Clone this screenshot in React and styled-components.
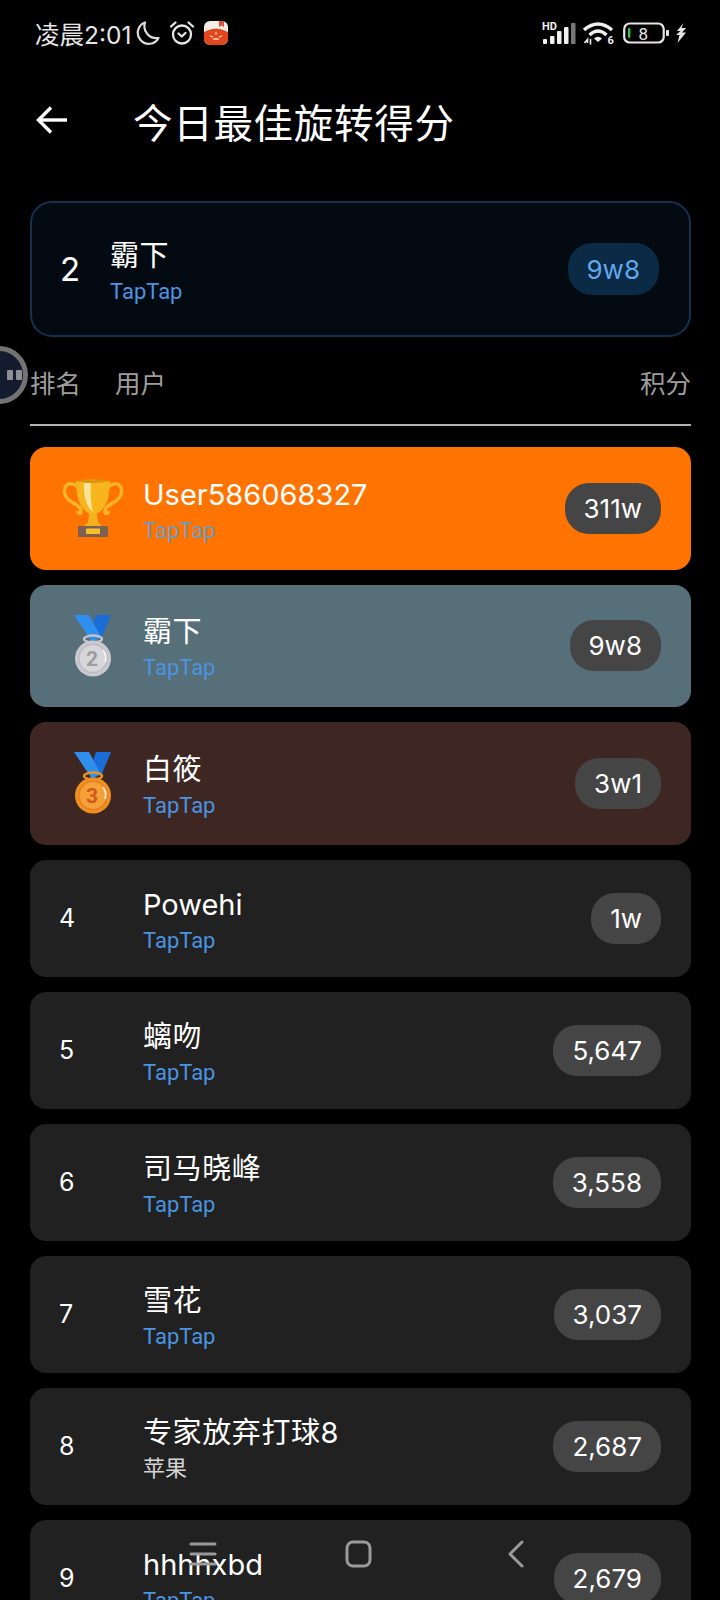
import styled, { createGlobalStyle } from "styled-components";

const GlobalStyle = createGlobalStyle`
    html, body {
        margin: 0;
        padding: 0;
        background: #000;
    }
    * {
        box-sizing: border-box;
    }
`

const Screen = styled.div`
    position: relative;
    width: 720px;
    height: 1600px;
    overflow: hidden;
    background: #000;
    color: #fff;
    font-family: "Inter", "Noto Sans CJK SC", sans-serif;
`

const StatusBar = styled.div`
    height: 68px;
    padding: 0 34px 2px 35px;
    display: flex;
    align-items: center;
    justify-content: space-between;
`

const StatusGroup = styled.div`
    display: flex;
    align-items: center;
    gap: ${(p) => p.$gap || 0}px;
`

const Clock = styled.span`
    width: 95px;
    font-size: 24.5px;
    color: #e6e6e6;
    white-space: nowrap;
    margin-right: -3px;
`

const Header = styled.div`
    height: 104px;
    padding: 0 0 0 36px;
    display: flex;
    align-items: center;
`

const Title = styled.h1`
    margin: 0 0 0 65px;
    font-size: 39.5px;
    font-weight: 400;
    letter-spacing: 0.7px;
`

const Content = styled.div`
    padding: 29px 29px 0 30px;
`

const MyCard = styled.div`
    height: 136px;
    padding: 0 30px 0 28px;
    display: flex;
    align-items: center;
    border: 2px solid #14324f;
    border-radius: 22px;
    background: #030a12;
`

const MyRank = styled.div`
    width: 51px;
    font-size: 33px;
`

const UserInfo = styled.div`
    flex: 1;
    min-width: 0;
    padding-top: 3px;
    display: flex;
    flex-direction: column;
`

const UserName = styled.div`
    font-size: 29px;
    line-height: 38px;
    letter-spacing: ${(p) => (p.$latin ? 0 : 0.6)}px;
    margin-left: -1px;
`

const Platform = styled.div`
    margin: 3px 0 0 -1px;
    font-family: "Roboto", "Noto Sans CJK SC", sans-serif;
    font-size: 22px;
    line-height: 27px;
    color: ${(p) => p.$color || "#4a94e0"};
`

const MyScore = styled.div`
    height: 52px;
    padding: 0 19px;
    display: flex;
    align-items: center;
    border-radius: 24px;
    background: #0b2a45;
    color: #62a8ea;
    font-size: 26px;
`

const TableHead = styled.div`
    height: 89px;
    padding-top: 2px;
    display: flex;
    align-items: center;
    justify-content: space-between;
    border-bottom: 2px solid #b3b3b3;
    color: #9e9e9e;
    font-size: 25.5px;
`

const HeadLeft = styled.div`
    display: flex;
    gap: 34px;
`

const Rows = styled.div`
    margin-top: 21px;
    display: flex;
    flex-direction: column;
    gap: 15px;
`

const Row = styled.div`
    height: ${(p) => (p.$top ? 122.5 : 117)}px;
    padding: 0 30px 0 29px;
    display: flex;
    align-items: center;
    flex-shrink: 0;
    border-radius: 16px;
    background: ${(p) => p.$bg || "#212121"};
`

const RankCell = styled.div`
    width: 85px;
    flex-shrink: 0;
    display: flex;
    align-items: center;
    font-size: 25px;
`

const BadgeSlot = styled.div`
    width: 67px;
    display: flex;
    justify-content: center;
`

const Score = styled.div`
    height: 51px;
    padding: 0 19px;
    display: flex;
    align-items: center;
    border-radius: 24px;
    background: #454545;
    font-size: 26px;
`

const Bubble = styled.div`
    position: absolute;
    left: -30px;
    top: 346px;
    width: 58px;
    height: 58px;
    display: flex;
    align-items: center;
    justify-content: flex-end;
    gap: 3px;
    padding-right: 1px;
    border: 5px solid #737373;
    border-radius: 50%;
    background: #131c2e;
`

const BubbleEye = styled.span`
    width: 6px;
    height: 10px;
    border-radius: 1px;
    background: #8d8f94;
`

const NavBar = styled.div`
    position: absolute;
    left: 0;
    right: 0;
    top: 1540px;
    height: 50px;
    pointer-events: none;
`

const NavIcon = styled.svg`
    position: absolute;
    top: 0;
    left: ${(p) => p.$left}px;
`

const Moon = () => (
    <svg width="24" height="24" viewBox="0 0 24 24" fill="none" stroke="#dcdcdc" strokeWidth="2.2">
        <path d="M9 1.5 A11 11 0 1 0 22.5 17 A12 12 0 0 1 9 1.5 Z" strokeLinejoin="round" />
    </svg>
)

const Alarm = () => (
    <svg width="26" height="26" viewBox="0 0 26 26" fill="none" stroke="#e6e6e6" strokeWidth="2.3" strokeLinecap="round" strokeLinejoin="round">
        <circle cx="13" cy="14.5" r="9" />
        <path d="M9.5 13.5 L12.8 16.5 L16.5 13" />
        <path d="M2 6.5 L6.5 2.5 M24 6.5 L19.5 2.5" />
    </svg>
)

const TomatoApp = () => (
    <svg width="24" height="24" viewBox="0 0 24 24">
        <rect width="24" height="24" rx="6" fill="#f7efe6" />
        <path d="M0 11 Q12 4 24 11 V18 A6 6 0 0 1 18 24 H6 A6 6 0 0 1 0 18 Z" fill="#e2461c" />
        <path d="M15 0 H20 V6 L17.5 4.5 L15 6 Z" fill="#d9533a" />
        <path d="M6.5 15 L8.5 16 M12 11.5 V13.5 M17.5 15 L15.5 16 M9.5 18 H14.5" stroke="#f9d8b8" strokeWidth="1.3" strokeLinecap="round" />
    </svg>
)

const Signal = () => (
    <svg width="34" height="24" viewBox="0 0 34 24">
        <text x="0" y="9" fill="#f0f0f0" fontSize="11" fontWeight="700" fontFamily="Roboto, sans-serif">HD</text>
        <rect x="1" y="18" width="4" height="5" rx="1" fill="#f0f0f0" />
        <rect x="8" y="15" width="4.5" height="8" rx="1" fill="#f0f0f0" />
        <rect x="15" y="10" width="4.5" height="13" rx="1" fill="#f0f0f0" />
        <rect x="22" y="6" width="4.5" height="17" rx="1" fill="#f0f0f0" />
        <rect x="29" y="2" width="4.5" height="21" rx="1" fill="#777" />
    </svg>
)

const Wifi = () => (
    <svg width="33" height="26" viewBox="0 0 33 26" fill="none">
        <path d="M1 10 Q15 -2 29 10" stroke="#f0f0f0" strokeWidth="3.4" />
        <path d="M6.5 15 Q15 7 23.5 15" stroke="#f0f0f0" strokeWidth="3.4" />
        <path d="M15 22 L11 18.5 Q15 15 19 18.5 Z" fill="#f0f0f0" />
        <text x="24.5" y="24" fill="#f0f0f0" fontSize="11" fontWeight="700" fontFamily="Roboto, sans-serif">6</text>
        <path d="M1.5 23 L4.5 19.5 V23 M7.5 19 V24.5" stroke="#f0f0f0" strokeWidth="1.6" />
    </svg>
)

const Battery = () => (
    <svg width="46" height="22" viewBox="0 0 46 22" fill="none">
        <rect x="1.2" y="1.5" width="39.5" height="19" rx="5.5" stroke="#e6e6e6" strokeWidth="2.2" />
        <rect x="5" y="6" width="2.4" height="10" rx="1.2" fill="#35c24a" />
        <text x="15.5" y="17.5" fill="#e6e6e6" fontSize="17" fontFamily="Roboto, sans-serif">8</text>
        <rect x="43" y="8" width="3" height="6" rx="1" fill="#e6e6e6" />
    </svg>
)

const Bolt = () => (
    <svg width="10" height="20" viewBox="0 0 10 20">
        <path d="M7.5 0 L1 8 H4.5 L0 12 H3.5 L1.5 20 L10 9.5 H6 L10 5 H5.5 Z" fill="#e6e6e6" />
    </svg>
)

const BackArrow = () => (
    <svg width="32" height="30" viewBox="0 0 32 30" fill="none" stroke="#fff" strokeWidth="3.4">
        <path d="M31 15 H3" />
        <path d="M15 2.5 L2.5 15 L15 27.5" />
    </svg>
)

const Trophy = () => (
    <svg width="62" height="60" viewBox="0 0 62 60" fill="none">
        <path d="M15 8 C3 0 -2 15 7 22 C12 27 18 26 19 33 C20 37 15 36 16 33" stroke="#f6b428" strokeWidth="3.4" />
        <path d="M47 8 C59 0 64 15 55 22 C50 27 44 26 43 33 C42 37 47 36 46 33" stroke="#f6b428" strokeWidth="3.4" />
        <path d="M14 3 H48 C48 18 45 31 34 36 H28 C17 31 14 18 14 3 Z" fill="#f8b51d" />
        <path d="M22 5 H29 C28 16 29 26 31 34 C25 30 21 18 22 5 Z" fill="#fde39b" />
        <path d="M14 3 Q31 -1 48 3 Q31 7 14 3 Z" fill="#dd9411" />
        <path d="M27 36 H35 L36 44 L41 49 H21 L26 44 Z" fill="#f5b01c" />
        <rect x="16" y="48" width="30" height="11" fill="#7c6152" />
        <rect x="24" y="50.5" width="14" height="5.5" fill="#f8bf28" />
    </svg>
)

const Medal = ({ rank }) => {
    const bronze = rank === 3
    const rim = bronze ? "#f0911f" : "#c9c9cf"
    const inner = bronze ? "#f4a138" : "#d7d7db"
    const digit = bronze ? "#d3581e" : "#9c9ca3"
    const ring = bronze ? "#e8951f" : "#c2c2c8"
    return (
        <svg width="38" height="62" viewBox="0 0 38 62" fill="none">
            <path d="M22 0 H37 L27 24 L16 18 Z" fill="#1a6cd6" />
            <path d="M0 0 H15 L27 22 L18 27 Z" fill="#2f8fee" />
            <ellipse cx="19" cy="24" rx="9" ry="3.5" stroke={ring} strokeWidth="2.4" />
            <circle cx="19" cy="43.5" r="18" fill={rim} />
            <circle cx="19" cy="43.5" r="14" fill={inner} stroke={digit} strokeOpacity="0.35" strokeWidth="1.5" />
            <path d="M29 35 A13 13 0 0 1 31 47" stroke="#fff" strokeOpacity="0.7" strokeWidth="2" />
            <text x="18" y="51" textAnchor="middle" fill={digit} fontSize="21" fontWeight="700" fontFamily="Roboto, sans-serif">{rank}</text>
        </svg>
    )
}

const players = [
    { rank: 1, name: "User586068327", score: "311w", bg: "#ff7300", platformColor: "#6c9bc0", latin: true },
    { rank: 2, name: "霸下", score: "9w8", bg: "#566f79" },
    { rank: 3, name: "白筱", score: "3w1", bg: "#3e2723" },
    { rank: 4, name: "Powehi", score: "1w", latin: true },
    { rank: 5, name: "螭吻", score: "5,647" },
    { rank: 6, name: "司马晓峰", score: "3,558" },
    { rank: 7, name: "雪花", score: "3,037" },
    { rank: 8, name: "专家放弃打球8", score: "2,687", platform: "苹果", platformColor: "#d6d6d6" },
    { rank: 9, name: "hhhhxbd", score: "2,679", latin: true },
]

function RankBadge({ rank }) {
    if (rank === 1) return <BadgeSlot><Trophy /></BadgeSlot>
    if (rank <= 3) return <BadgeSlot><Medal rank={rank} /></BadgeSlot>
    return rank
}

function App() {
    return (
        <Screen>
            <GlobalStyle />
            <StatusBar>
                <StatusGroup $gap={9}>
                    <Clock>凌晨2:01</Clock>
                    <Moon />
                    <Alarm />
                    <TomatoApp />
                </StatusGroup>
                <StatusGroup $gap={7}>
                    <Signal />
                    <Wifi />
                    <Battery />
                    <Bolt />
                </StatusGroup>
            </StatusBar>
            <Header>
                <BackArrow />
                <Title>今日最佳旋转得分</Title>
            </Header>
            <Content>
                <MyCard>
                    <MyRank>2</MyRank>
                    <UserInfo>
                        <UserName>霸下</UserName>
                        <Platform>TapTap</Platform>
                    </UserInfo>
                    <MyScore>9w8</MyScore>
                </MyCard>
                <TableHead>
                    <HeadLeft>
                        <span>排名</span>
                        <span>用户</span>
                    </HeadLeft>
                    <span>积分</span>
                </TableHead>
                <Rows>
                    {players.map((p) => (
                        <Row key={p.rank} $top={p.rank <= 3} $bg={p.bg}>
                            <RankCell>
                                <RankBadge rank={p.rank} />
                            </RankCell>
                            <UserInfo>
                                <UserName $latin={p.latin}>{p.name}</UserName>
                                <Platform $color={p.platformColor}>{p.platform || "TapTap"}</Platform>
                            </UserInfo>
                            <Score>{p.score}</Score>
                        </Row>
                    ))}
                </Rows>
            </Content>
            <Bubble>
                <BubbleEye />
                <BubbleEye />
            </Bubble>
            <NavBar>
                <NavIcon $left={189} width="28" height="26" viewBox="0 0 28 26" fill="none" stroke="#9a9a9a" strokeWidth="3" strokeLinecap="round">
                    <path d="M2 4 H26 M2 14 H26 M2 24 H26" />
                </NavIcon>
                <NavIcon $left={345} width="28" height="28" viewBox="0 0 28 28" fill="none" stroke="#9a9a9a" strokeWidth="3">
                    <rect x="2" y="2" width="23" height="24" rx="6" />
                </NavIcon>
                <NavIcon $left={505} width="22" height="28" viewBox="0 0 22 28" fill="none" stroke="#9a9a9a" strokeWidth="3" strokeLinecap="round" strokeLinejoin="round">
                    <path d="M17 2 L5 14 L17 26" />
                </NavIcon>
            </NavBar>
        </Screen>
    )
}

export default App;
